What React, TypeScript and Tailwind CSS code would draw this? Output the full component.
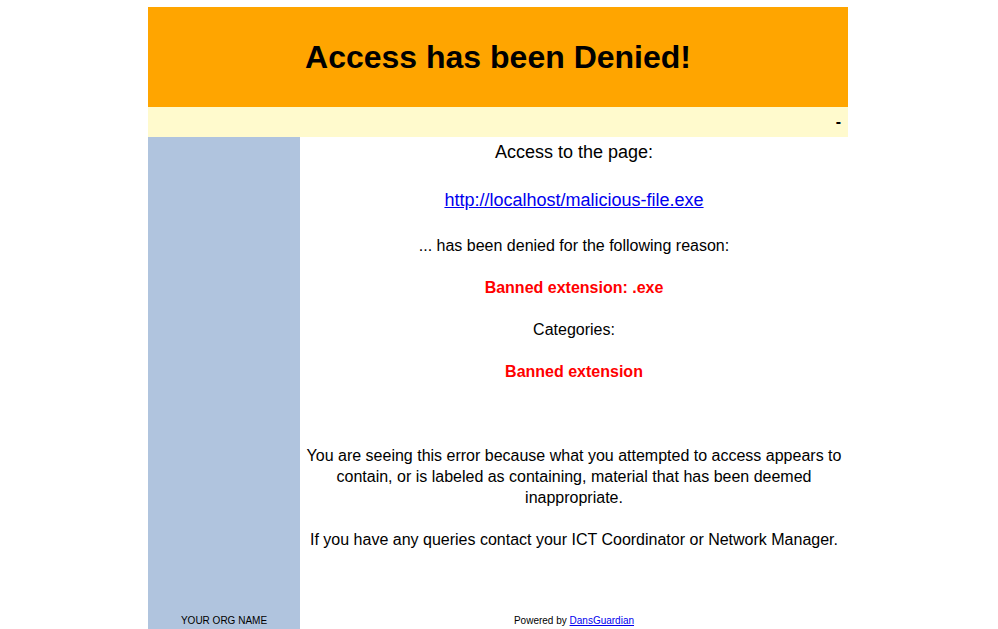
import React from 'react';

const App: React.FC = () => {
  return (
    <div className="min-h-screen bg-white font-['Liberation_Sans',Arial,sans-serif] text-black flex justify-center pr-[2px]">
      <div className="w-[700px] pt-[7px]">
        {/* Header */}
        <div className="h-[100px] bg-[#ffa500] flex items-center justify-center">
          <h1 className="text-[32px] font-bold leading-none">Access has been Denied!</h1>
        </div>
        <div className="h-[30px] bg-[#fffacd] flex items-center justify-end pr-[7px]">
          <span className="text-[16px] font-bold leading-none">-</span>
        </div>

        <div className="flex">
          {/* Sidebar */}
          <div className="w-[152px] bg-[#b0c4de] flex flex-col justify-end items-center pb-[2px]">
            <span className="text-[10px] leading-[12px]">YOUR ORG NAME</span>
          </div>

          {/* Main */}
          <div className="flex-1 flex flex-col items-center text-center pb-[2px]">
            <p className="mt-[5px] text-[18px] leading-[20px]">Access to the page:</p>
            <a href="#" className="mt-[28px] text-[18px] leading-[20px] text-[#0000ee] underline">
              http://localhost/malicious-file.exe
            </a>
            <p className="mt-[26px] text-[16px] leading-[20px]">... has been denied for the following reason:</p>
            <p className="mt-[22px] text-[16px] leading-[20px] font-bold text-[#ff0000]">Banned extension: .exe</p>
            <p className="mt-[22px] text-[16px] leading-[20px]">Categories:</p>
            <p className="mt-[22px] text-[16px] leading-[20px] font-bold text-[#ff0000]">Banned extension</p>
            <p className="mt-[63px] text-[16px] leading-[21px]">
              You are seeing this error because what you attempted to access appears to contain, or is labeled as
              containing, material that has been deemed inappropriate.
            </p>
            <p className="mt-[21px] text-[16px] leading-[21px]">
              If you have any queries contact your ICT Coordinator or Network Manager.
            </p>
            <p className="mt-[65px] text-[10px] leading-[12px]">
              Powered by{' '}
              <a href="#" className="text-[#0000ee] underline">
                DansGuardian
              </a>
            </p>
          </div>
        </div>
      </div>
    </div>
  );
};

export default App;
